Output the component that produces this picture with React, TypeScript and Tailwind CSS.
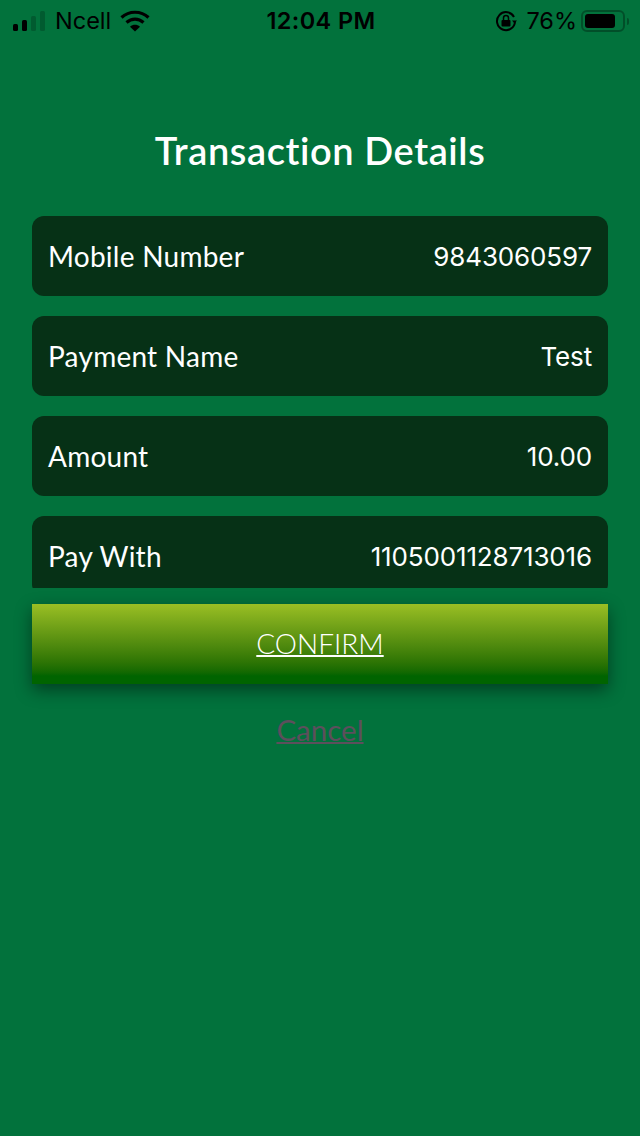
const rows = [
  { label: "Mobile Number", value: "9843060597" },
  { label: "Payment Name", value: "Test" },
  { label: "Amount", value: "10.00" },
  { label: "Pay With", value: "1105001128713016" },
]

function StatusBar() {
  return (
    <div className="flex h-[40px] items-center justify-between pl-[13px] pr-[11px] pt-[2px] font-['Inter',sans-serif] text-[23.500px] text-black">
      <div className="flex w-[200px] items-center">
        <svg width="34" height="20" viewBox="0 0 34 20" fill="currentColor">
          <rect x="0" y="13" width="5" height="7" rx="1.5" />
          <rect x="9" y="9" width="5" height="11" rx="1.5" />
          <rect x="18" y="5" width="5" height="15" rx="1.5" fillOpacity="0.2" />
          <rect x="27" y="0" width="5" height="20" rx="1.5" fillOpacity="0.2" />
        </svg>
        <span className="ml-[8px] leading-none">Ncell</span>
        <svg className="ml-[9px]" width="30" height="22" viewBox="0 0 30 22" fill="none" stroke="currentColor" strokeWidth="3.2">
          <path d="M1.5 7.5C9 .5 21 .5 28.500 7.500" />
          <path d="M6.500 12.500C11.500 8 18.500 8 23.500 12.500" />
          <path d="M15 21.500 10 16.800C13 14.200 17 14.200 20 16.800Z" fill="currentColor" stroke="none" />
        </svg>
      </div>
      <span className="font-semibold leading-none tracking-[0.4px]">12:04 PM</span>
      <div className="flex w-[200px] items-center justify-end">
        <svg width="22" height="22" viewBox="0 0 22 22" fill="none" stroke="currentColor" strokeWidth="2">
          <path d="M19 7A9 9 0 1 0 20 11.500" />
          <path d="M17 10.500h5l-2.500 3z" fill="currentColor" stroke="none" />
          <rect x="6.500" y="10" width="9" height="6.500" rx="1" fill="currentColor" stroke="none" />
          <path d="M8.500 10V8a2.500 2.500 0 0 1 5 0v2" strokeWidth="1.500" />
        </svg>
        <span className="ml-[9px] leading-none">76%</span>
        <div className="ml-[4px] flex items-center">
          <div className="flex h-[22px] w-[44px] items-center rounded-[6px] border-2 border-black/30 p-[2px]">
            <div className="h-full w-[30px] rounded-[3px] bg-black" />
          </div>
          <div className="ml-[2px] h-[7px] w-[2px] rounded-r-sm bg-black/30" />
        </div>
      </div>
    </div>
  )
}

export default function App() {
  return (
    <div className="flex h-[1136px] w-[640px] flex-col overflow-hidden bg-[#02723c] font-['Lato',sans-serif] text-white">
      <StatusBar />
      <h1 className="mt-[87px] h-[89px] text-center text-[38px] font-semibold leading-[46px] tracking-[0.6px]">Transaction Details</h1>
      <div className="mx-[32px] flex h-[372px] flex-col gap-[20px] overflow-hidden">
        {rows.map((row) => (
          <div key={row.label} className="flex h-[80px] shrink-0 items-center justify-between rounded-[12px] bg-[#063116] pl-[16px] pr-[16px] text-[28px] tracking-[0.25px]">
            <span>{row.label}</span>
            <span className="font-['Inter',sans-serif] text-[26px] tracking-[-0.15px]">{row.value}</span>
          </div>
        ))}
      </div>
      <button className="mx-[32px] mt-[16px] flex h-[80px] items-center justify-center bg-gradient-to-b from-[#9abf24] to-[#006400] to-90% pb-[2px] text-[28px] font-light underline decoration-2 shadow-[0_6px_16px_rgba(0,0,0,0.45)]">
        CONFIRM
      </button>
      <a className="mt-[28px] text-center text-[29.500px] leading-[36px] text-[#5c4f5c] underline decoration-2">Cancel</a>
    </div>
  )
}
